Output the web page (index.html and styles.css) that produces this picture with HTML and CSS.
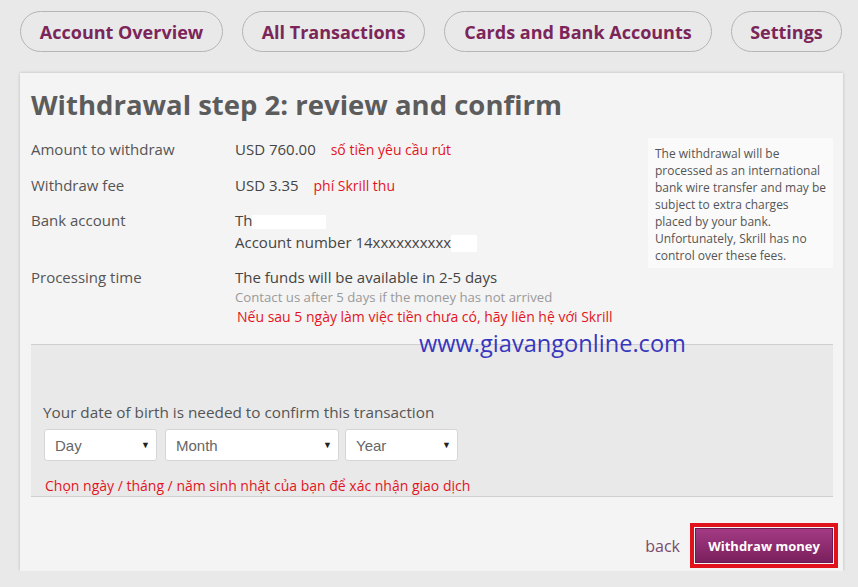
FILE: index.html
```html
<!DOCTYPE html>
<html lang="en">
<head>
    <meta charset="UTF-8">
    <meta name="viewport" content="width=device-width, initial-scale=1.0">
    <title>Withdrawal step 2</title>
    <link rel="stylesheet" href="styles.css">
</head>
<body>
    <nav class="tabs">
        <a class="tab tab-overview" href="#">Account Overview</a>
        <a class="tab tab-transactions" href="#">All Transactions</a>
        <a class="tab tab-cards" href="#">Cards and Bank Accounts</a>
        <a class="tab tab-settings" href="#">Settings</a>
    </nav>

    <div class="card">
        <h1>Withdrawal step 2: review and confirm</h1>

        <div class="summary">
            <div class="details">
                <div class="row row-amount">
                    <span class="label">Amount to withdraw</span>
                    <span class="value">USD 760.00 <span class="note">số tiền yêu cầu rút</span></span>
                </div>
                <div class="row row-fee">
                    <span class="label">Withdraw fee</span>
                    <span class="value">USD 3.35 <span class="note">phí Skrill thu</span></span>
                </div>
                <div class="row row-bank">
                    <span class="label">Bank account</span>
                    <span class="value">
                        Th<span class="hidden hidden-name"></span><br>
                        Account number 14xxxxxxxxxx<span class="hidden hidden-acc"></span>
                    </span>
                </div>
                <div class="row">
                    <span class="label">Processing time</span>
                    <span class="value">
                        The funds will be available in 2-5 days
                        <span class="hint">Contact us after 5 days if the money has not arrived</span>
                        <span class="note note-block">Nếu sau 5 ngày làm việc tiền chưa có, hãy liên hệ với Skrill</span>
                    </span>
                </div>
            </div>
            <div class="info">
                The withdrawal will be processed as an international bank wire transfer and may be subject to extra charges placed by your bank. Unfortunately, Skrill has no control over these fees.
            </div>
        </div>

        <div class="confirm">
            <span class="watermark">www.giavangonline.com</span>
            <p class="dob-label">Your date of birth is needed to confirm this transaction</p>
            <div class="selects">
                <div class="select select-day">Day <span class="arrow">&#9660;</span></div>
                <div class="select select-month">Month <span class="arrow">&#9660;</span></div>
                <div class="select select-year">Year <span class="arrow">&#9660;</span></div>
            </div>
            <p class="note dob-note">Chọn ngày / tháng / năm sinh nhật của bạn để xác nhận giao dịch</p>
        </div>

        <div class="actions">
            <a class="back" href="#">back</a>
            <button class="btn-withdraw">Withdraw money</button>
        </div>
    </div>
</body>
</html>
```

FILE: styles.css
```css
/* Page */
body {
    margin: 0;
    padding: 11px 15px 0 20px;
    background: #e9e9e9;
    font-family: "Open Sans", Arial, sans-serif;
    color: #444;
}

/* Top tabs */
.tabs {
    display: flex;
    gap: 19px;
    height: 41px;
}

.tab {
    box-sizing: border-box;
    display: flex;
    align-items: center;
    justify-content: center;
    height: 41px;
    border: 1px solid #b5b5b5;
    border-radius: 21px;
    color: #7b2559;
    font-weight: bold;
    font-size: 18px;
    text-decoration: none;
}

.tab-overview { width: 203px; }
.tab-transactions { width: 183px; }
.tab-cards { width: 268px; }
.tab-settings { width: 111px; }

/* Main card */
.card {
    margin-top: 21px;
    width: 823px;
    box-sizing: border-box;
    padding: 14px 10px 8px 11px;
    background: #f4f4f4;
    box-shadow: 0 0 3px rgba(0, 0, 0, 0.2);
}

h1 {
    margin: 0 0 15px;
    font-size: 27.5px;
    line-height: 36px;
    color: #5c5c5c;
    font-weight: bold;
}

.summary {
    display: flex;
    justify-content: space-between;
    align-items: flex-start;
}

.row {
    display: grid;
    grid-template-columns: 204px 1fr;
    font-size: 15px;
    line-height: 22px;
}

.row-amount { margin-bottom: 13px; }
.row-fee { margin-bottom: 12px; }
.row-bank { margin-bottom: 13px; }

.label {
    color: #555;
}

.value {
    color: #444;
}

.note {
    color: #e3141e;
    font-size: 14px;
    margin-left: 11px;
}

.note-block {
    display: block;
    margin-left: 2px;
    line-height: 22px;
}

.hint {
    display: block;
    font-size: 13.2px;
    line-height: 18px;
    color: #9a9a9a;
}

.hidden {
    display: inline-block;
    background: #fff;
    vertical-align: middle;
}

.hidden-name {
    width: 74px;
    height: 14px;
}

.hidden-acc {
    width: 26px;
    height: 17px;
}

.info {
    width: 185px;
    box-sizing: border-box;
    padding: 7px 6px 4px 7px;
    background: #fafafa;
    font-size: 12px;
    line-height: 17px;
    color: #555;
}

/* Date of birth section */
.confirm {
    position: relative;
    margin-top: 16px;
    padding: 58px 12px 0;
    height: 153px;
    box-sizing: border-box;
    background: #e9e9e9;
    border-top: 1px solid #cfcfcf;
    border-bottom: 1px solid #cfcfcf;
}

.watermark {
    position: absolute;
    top: -16px;
    left: 388px;
    font-size: 23.6px;
    line-height: 28px;
    color: #3737bd;
}

.dob-label {
    margin: 0 0 8px;
    font-size: 15.3px;
    line-height: 18px;
    color: #555;
}

.selects {
    display: flex;
    margin-left: 1px;
}

.select {
    box-sizing: border-box;
    height: 32px;
    display: flex;
    align-items: center;
    justify-content: space-between;
    padding: 0 6px 0 10px;
    background: #fff;
    border: 1px solid #d6d6d6;
    border-radius: 3px;
    font-family: Arial, "Liberation Sans", sans-serif;
    font-size: 15px;
    color: #666;
}

.select-day { width: 113px; margin-right: 8px; }
.select-month { width: 174px; margin-right: 6px; }
.select-year { width: 113px; }

.arrow {
    font-size: 9px;
    color: #222;
}

.dob-note {
    margin: 16px 0 0 2px;
    line-height: 18px;
}

/* Footer */
.actions {
    display: flex;
    justify-content: flex-end;
    align-items: center;
    gap: 15px;
    margin-top: 31px;
}

.back {
    color: #7a4a6c;
    font-size: 16px;
    text-decoration: none;
}

.btn-withdraw {
    width: 138px;
    height: 35px;
    border: 1px solid #6e1a52;
    color: #fff;
    font-family: "Open Sans", Arial, sans-serif;
    font-weight: bold;
    font-size: 13px;
    background: linear-gradient(#a33b84, #7b1f5d);
    outline: 4px solid #e2121d;
    outline-offset: 1px;
    cursor: pointer;
}
```
